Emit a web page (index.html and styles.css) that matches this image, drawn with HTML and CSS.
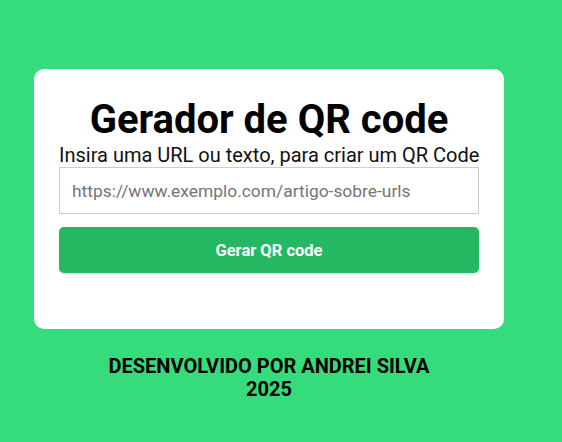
FILE: index.html
```html
<!DOCTYPE html>
<html lang="pt-BR">
<head>
<meta charset="utf-8">
<title>Gerador de QR code</title>
<link rel="stylesheet" href="styles.css">
</head>
<body>
<div class="page">
  <main class="card">
    <h1 class="title">Gerador de QR code</h1>
    <p class="subtitle">Insira uma URL ou texto, para criar um QR Code</p>
    <input class="field" type="text" placeholder="https://www.exemplo.com/artigo-sobre-urls">
    <button class="btn" type="button">Gerar QR code</button>
  </main>
  <footer class="footer">
    <p>DESENVOLVIDO POR ANDREI SILVA</p>
    <p>2025</p>
  </footer>
</div>
</body>
</html>
```
FILE: styles.css
```css
* { box-sizing: border-box; }
html, body { margin: 0; height: 100%; }
body {
  background: #36dc7c;
  font-family: Roboto, "Noto Sans", sans-serif;
}
.page {
  width: 538px;
  display: flex;
  flex-direction: column;
  align-items: center;
  padding-top: 69px;
}
.card {
  width: 470px;
  background: #fff;
  border-radius: 10px;
  padding: 28px 25px 56px;
  display: flex;
  flex-direction: column;
}
.title {
  margin: 0;
  text-align: center;
  font-size: 40px;
  font-weight: 700;
  color: #000;
  line-height: 46px;
}
.subtitle {
  margin: 0;
  font-size: 20px;
  color: #111;
  text-align: center;
  white-space: nowrap;
}
.field {
  height: 47px;
  border: 1px solid #ccc;
  padding: 0 12px;
  font-family: Roboto, sans-serif;
  font-size: 17.4px;
  color: #333;
  outline: none;
}
.field::placeholder { color: #757575; }
.btn {
  margin-top: 13px;
  height: 46px;
  border: none;
  border-radius: 5px;
  background: #25b863;
  color: #fff;
  font-family: Roboto, sans-serif;
  font-weight: 700;
  font-size: 16.5px;
  box-shadow: 0 1px 2px rgba(0,0,0,0.15);
}
.footer {
  margin-top: 26px;
  text-align: center;
  font-weight: 700;
  font-size: 20px;
  line-height: 23px;
  color: #000;
}
.footer p { margin: 0; }
```
